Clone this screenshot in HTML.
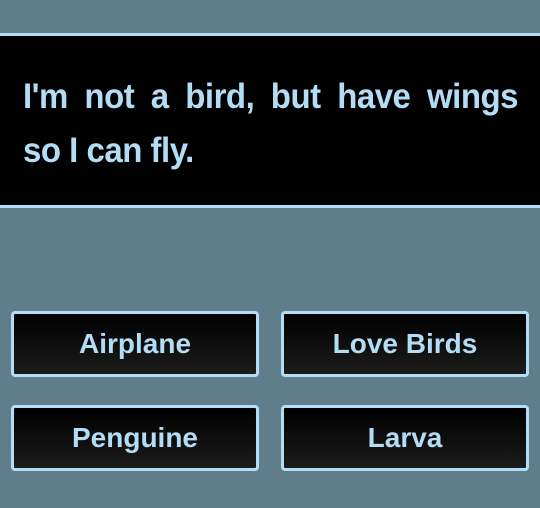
<html><head><style>
body{margin:0;width:540px;height:508px;background:#607d8b;position:relative;overflow:hidden;font-family:"Liberation Sans",Arial,sans-serif}
.q{position:absolute;left:0;top:33px;width:540px;height:169px;background:#000;border-top:3px solid #b3dcf5;border-bottom:3px solid #b3dcf5}
.l{position:absolute;left:23px;right:22px;color:#b3dcf5;font-size:33px;font-weight:bold;line-height:40px;letter-spacing:-0.5px;white-space:nowrap;transform:scaleY(1.08)}
.j{text-align:justify;text-align-last:justify;white-space:normal}
.b{position:absolute;width:242px;height:60px;border:3px solid #b3dcf5;border-radius:4px;background:linear-gradient(#000,#1c1c1c);color:#b3dcf5;font-size:28px;font-weight:bold;text-align:center;line-height:60px;letter-spacing:0px}
</style></head><body>
<div class="q">
<div class="l j" style="top:40px">I'm not a bird, but have wings</div>
<div class="l" style="top:94px">so I can fly.</div>
</div>
<div class="b" style="left:11px;top:311px">Airplane</div>
<div class="b" style="left:281px;top:311px">Love Birds</div>
<div class="b" style="left:11px;top:405px">Penguine</div>
<div class="b" style="left:281px;top:405px">Larva</div>
</body></html>
